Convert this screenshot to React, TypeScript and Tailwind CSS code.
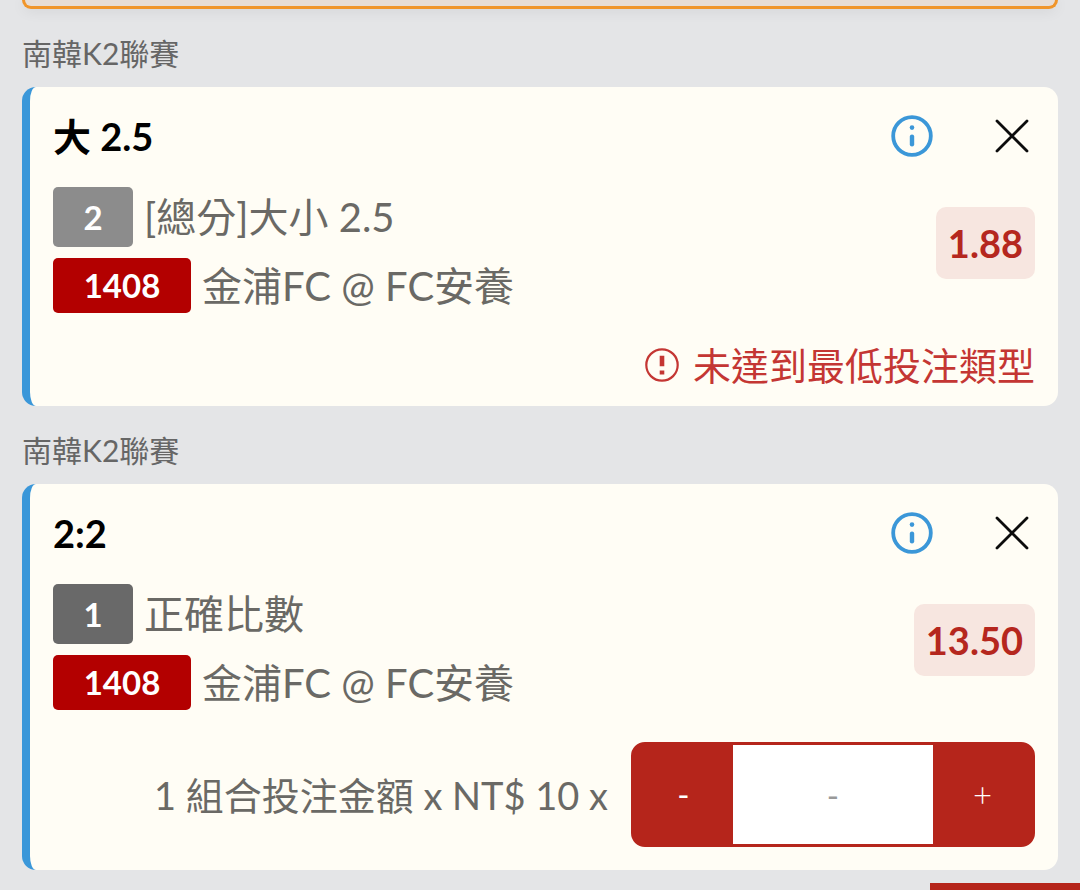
import { useState } from 'react';

type Bet = {
  id: string;
  league: string;
  pick: string;
  count: number;
  countClass: string;
  market: string;
  code: string;
  match: string;
  odds: string;
  error?: string;
  stake?: string;
};

const BETS: Bet[] = [
  {
    id: 'total',
    league: '南韓K2聯賽',
    pick: '大 2.5',
    count: 2,
    countClass: 'bg-[#8c8c8c]',
    market: '[總分]大小 2.5',
    code: '1408',
    match: '金浦FC @ FC安養',
    odds: '1.88',
    error: '未達到最低投注類型',
  },
  {
    id: 'score',
    league: '南韓K2聯賽',
    pick: '2:2',
    count: 1,
    countClass: 'bg-[#696969]',
    market: '正確比數',
    code: '1408',
    match: '金浦FC @ FC安養',
    odds: '13.50',
    stake: '1 組合投注金額 x NT$ 10 x',
  },
];

function InfoIcon() {
  return (
    <svg width="42" height="42" viewBox="0 0 42 42" fill="none" aria-hidden="true">
      <circle cx="21" cy="21" r="18.8" stroke="#3b97d8" strokeWidth="3.8" />
      <circle cx="21" cy="12.6" r="2.3" fill="#3b97d8" />
      <path d="M21 21.6v7.6" stroke="#3b97d8" strokeWidth="4.4" strokeLinecap="round" />
    </svg>
  );
}

function CloseIcon() {
  return (
    <svg width="34" height="34" viewBox="0 0 34 34" fill="none" aria-hidden="true">
      <path d="M2 2l30 30M32 2L2 32" stroke="#0c0c0c" strokeWidth="2.8" strokeLinecap="round" />
    </svg>
  );
}

function WarnIcon() {
  return (
    <svg width="34" height="34" viewBox="0 0 34 34" fill="none" aria-hidden="true">
      <circle cx="17" cy="17" r="15.7" stroke="#c43633" strokeWidth="2.2" />
      <path d="M17 7.7v10.6M17 22.6v4" stroke="#c43633" strokeWidth="4.6" />
    </svg>
  );
}

function Stepper({ id }: { id: string }) {
  const [units, setUnits] = useState('');
  const step = (by: number) => {
    const next = Math.max(0, Number(units || 0) + by);
    setUnits(next ? String(next) : '');
  };

  return (
    <div className="flex h-[105px] w-[404px] shrink-0 overflow-hidden rounded-[14px] border-[3px] border-[#b5251b] bg-[#b5251b] text-[33px]">
      <button type="button" aria-label="減少" onClick={() => step(-1)} className="w-[99px] shrink-0 text-white">
        -
      </button>
      <input
        id={id}
        inputMode="numeric"
        placeholder="-"
        value={units}
        onChange={(e) => setUnits(e.target.value.replace(/\D/g, ''))}
        className="min-w-0 flex-1 bg-white text-center text-[#666] outline-none placeholder:text-[#999]"
      />
      <button type="button" aria-label="增加" onClick={() => step(1)} className="w-[99px] shrink-0 font-light text-white">
        +
      </button>
    </div>
  );
}

function BetCard({ bet }: { bet: Bet }) {
  return (
    <section>
      <h2 className="pt-6 pb-[14px] text-[30px] leading-[40px] text-[#666]">{bet.league}</h2>
      <article className="rounded-[14px] border-l-8 border-[#3a97d9] bg-[#fffdf5] px-[23px] pt-5 pb-[23px]">
        <div className="flex h-[58px] items-center">
          <h3 className="flex-1 text-[38px] font-bold text-black">{bet.pick}</h3>
          <button type="button" aria-label="資訊" className="mr-[62px]">
            <InfoIcon />
          </button>
          <button type="button" aria-label="移除" className="mr-[6px]">
            <CloseIcon />
          </button>
        </div>

        <div className="mt-[22px] flex items-start justify-between">
          <div className="flex flex-col gap-[11px] text-[40px] text-[#6a6965]">
            <div className="flex h-[60px] items-center gap-[11px]">
              <span className={`grid h-full w-[80px] place-items-center rounded-[5px] text-[33px] font-bold text-white ${bet.countClass}`}>
                {bet.count}
              </span>
              <span>{bet.market}</span>
            </div>
            <div className="flex h-[55px] items-center gap-[11px]">
              <span className="grid h-full w-[138px] place-items-center rounded-[5px] bg-[#b30000] text-[33px] font-bold text-white">
                {bet.code}
              </span>
              <span>{bet.match}</span>
            </div>
          </div>
          <div className="mt-5 rounded-[10px] bg-[#f7e6e0] px-3 text-[38px] leading-[72px] font-bold text-[#b5271e]">
            {bet.odds}
          </div>
        </div>

        {bet.error && (
          <p className="mt-[34px] flex h-[36px] items-center justify-end gap-[14px] text-[38px] text-[#c43633]">
            <WarnIcon />
            {bet.error}
          </p>
        )}
        {bet.stake && (
          <div className="mt-8 flex items-center justify-end gap-[23px]">
            <label htmlFor={`units-${bet.id}`} className="text-[38px] text-[#6a6965]">
              {bet.stake}
            </label>
            <Stepper id={`units-${bet.id}`} />
          </div>
        )}
      </article>
    </section>
  );
}

export default function App() {
  return (
    <div className="flex min-h-screen flex-col bg-[#e4e5e7] font-['Lato','Noto_Sans_CJK_TC',sans-serif] leading-none">
      <main className="px-[22px]">
        {/* lower edge of the card scrolled off the top */}
        <div className="h-[9px] rounded-b-[12px] border-[3px] border-t-0 border-[#f0952a] bg-[#e7ddd5] shadow-[0_2px_14px_rgba(0,0,0,0.08)]" />
        {BETS.map((bet) => (
          <BetCard key={bet.id} bet={bet} />
        ))}
      </main>
      <button type="button" aria-label="投注" className="mt-[13px] ml-auto min-h-[7px] w-[150px] flex-1 bg-[#b5251b]" />
    </div>
  );
}
